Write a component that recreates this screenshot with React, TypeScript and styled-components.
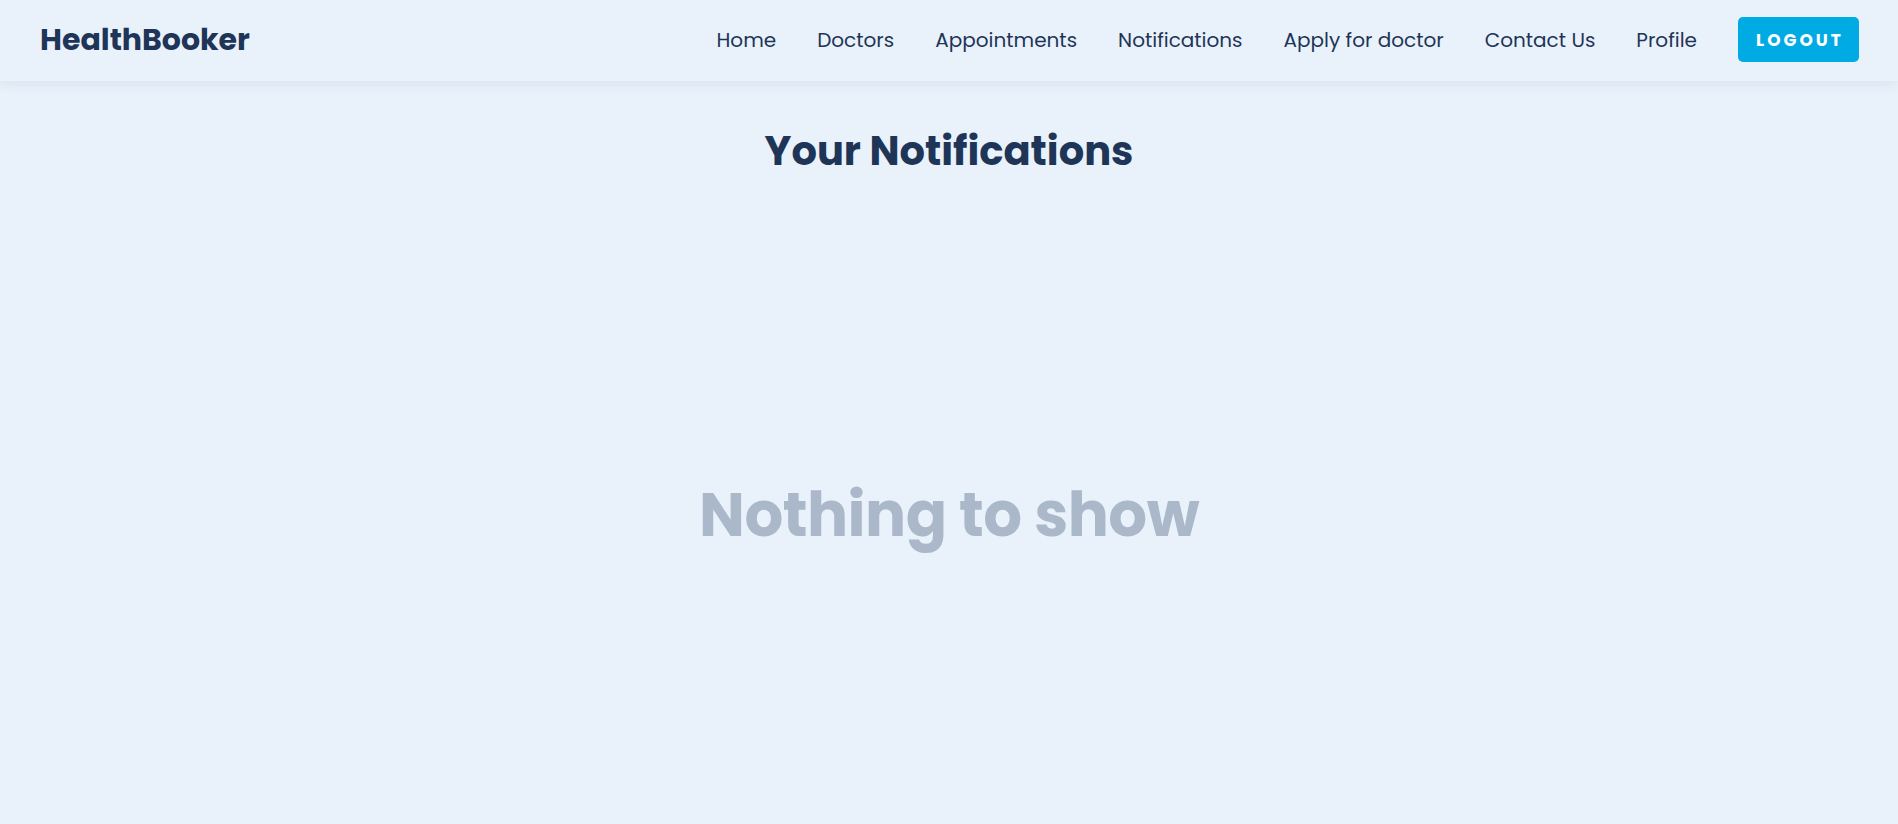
import React from 'react'
import styled, { createGlobalStyle } from 'styled-components'

const colors = {
  page: '#e9f2fb',
  navy: '#1e3557',
  muted: '#abb8ca',
  accent: '#00aae2'
}

const GlobalStyle = createGlobalStyle`
  html, body {
    margin: 0;
    padding: 0;
    background: ${colors.page};
    font-family: 'Poppins', 'Inter', 'Noto Sans', sans-serif;
    color: ${colors.navy};
  }
  * {
    box-sizing: border-box;
  }
`

const StyledPage = styled.div`
  display: flex;
  flex-direction: column;
  min-height: 100vh;
  overflow: hidden;
`

const StyledNavbar = styled.header`
  display: flex;
  align-items: center;
  justify-content: space-between;
  height: 81px;
  padding: 0 39px 2px 40px;
  background: ${colors.page};
  box-shadow: 0 3px 12px rgba(30, 53, 87, 0.08);
  position: relative;
  z-index: 1;
`

const StyledLogo = styled.a`
  font-size: 30px;
  font-weight: 700;
  color: ${colors.navy};
  text-decoration: none;
`

const StyledNavList = styled.nav`
  display: flex;
  align-items: center;
  gap: 41px;
`

const StyledNavLink = styled.a`
  font-size: 20px;
  font-weight: 400;
  color: ${colors.navy};
  text-decoration: none;
  cursor: pointer;
`

const StyledLogoutButton = styled.button`
  width: 121px;
  height: 45px;
  padding: 0 0 0 3px;
  border: none;
  border-radius: 5px;
  background: ${colors.accent};
  color: #fff;
  font-family: inherit;
  font-size: 17px;
  font-weight: 700;
  letter-spacing: 3px;
  cursor: pointer;
`

const StyledMain = styled.main`
  flex: 1;
  display: flex;
  flex-direction: column;
`

const StyledHeading = styled.h2`
  margin: 46px 0 0;
  text-align: center;
  font-size: 40px;
  line-height: 48px;
  font-weight: 700;
  color: ${colors.navy};
`

const StyledEmpty = styled.div`
  flex: 1;
  display: flex;
  align-items: center;
  justify-content: center;
  padding-top: 30px;
`

const StyledEmptyText = styled.h3`
  margin: 0;
  font-size: 61px;
  font-weight: 700;
  letter-spacing: -0.5px;
  color: ${colors.muted};
`

const links = [
  'Home',
  'Doctors',
  'Appointments',
  'Notifications',
  'Apply for doctor',
  'Contact Us',
  'Profile'
]

export default function App() {
  return (
    <StyledPage>
      <GlobalStyle />
      <StyledNavbar>
        <StyledLogo>HealthBooker</StyledLogo>
        <StyledNavList>
          {links.map((link) => (
            <StyledNavLink key={link}>{link}</StyledNavLink>
          ))}
          <StyledLogoutButton>LOGOUT</StyledLogoutButton>
        </StyledNavList>
      </StyledNavbar>
      <StyledMain>
        <StyledHeading>Your Notifications</StyledHeading>
        <StyledEmpty>
          <StyledEmptyText>Nothing to show</StyledEmptyText>
        </StyledEmpty>
      </StyledMain>
    </StyledPage>
  )
}
